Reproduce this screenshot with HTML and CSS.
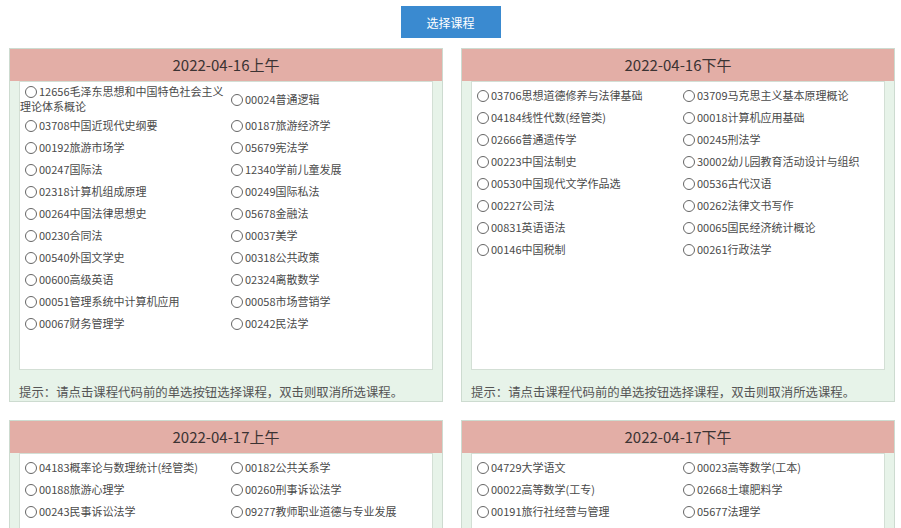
FILE: index.html
```html
<!DOCTYPE html>
<html lang="zh-CN">
<head>
  <meta charset="UTF-8">
  <title>选择课程</title>
  <link rel="stylesheet" href="styles.css">
</head>
<body>
  <div class="toolbar">
    <button class="btn-select" type="button">选择课程</button>
  </div>

  <div class="sessions">
    <!-- 16日上午 -->
    <div class="session">
      <div class="session-title">2022-04-16上午</div>
      <div class="course-box">
        <label class="course long"><input type="radio" name="s1">12656毛泽东思想和中国特色社会主义理论体系概论</label>
        <label class="course"><input type="radio" name="s1">00024普通逻辑</label>
        <label class="course"><input type="radio" name="s1">03708中国近现代史纲要</label>
        <label class="course"><input type="radio" name="s1">00187旅游经济学</label>
        <label class="course"><input type="radio" name="s1">00192旅游市场学</label>
        <label class="course"><input type="radio" name="s1">05679宪法学</label>
        <label class="course"><input type="radio" name="s1">00247国际法</label>
        <label class="course"><input type="radio" name="s1">12340学前儿童发展</label>
        <label class="course"><input type="radio" name="s1">02318计算机组成原理</label>
        <label class="course"><input type="radio" name="s1">00249国际私法</label>
        <label class="course"><input type="radio" name="s1">00264中国法律思想史</label>
        <label class="course"><input type="radio" name="s1">05678金融法</label>
        <label class="course"><input type="radio" name="s1">00230合同法</label>
        <label class="course"><input type="radio" name="s1">00037美学</label>
        <label class="course"><input type="radio" name="s1">00540外国文学史</label>
        <label class="course"><input type="radio" name="s1">00318公共政策</label>
        <label class="course"><input type="radio" name="s1">00600高级英语</label>
        <label class="course"><input type="radio" name="s1">02324离散数学</label>
        <label class="course"><input type="radio" name="s1">00051管理系统中计算机应用</label>
        <label class="course"><input type="radio" name="s1">00058市场营销学</label>
        <label class="course"><input type="radio" name="s1">00067财务管理学</label>
        <label class="course"><input type="radio" name="s1">00242民法学</label>
      </div>
      <p class="hint">提示：请点击课程代码前的单选按钮选择课程，双击则取消所选课程。</p>
    </div>

    <!-- 16日下午 -->
    <div class="session">
      <div class="session-title">2022-04-16下午</div>
      <div class="course-box">
        <label class="course"><input type="radio" name="s2">03706思想道德修养与法律基础</label>
        <label class="course"><input type="radio" name="s2">03709马克思主义基本原理概论</label>
        <label class="course"><input type="radio" name="s2">04184线性代数(经管类)</label>
        <label class="course"><input type="radio" name="s2">00018计算机应用基础</label>
        <label class="course"><input type="radio" name="s2">02666普通遗传学</label>
        <label class="course"><input type="radio" name="s2">00245刑法学</label>
        <label class="course"><input type="radio" name="s2">00223中国法制史</label>
        <label class="course"><input type="radio" name="s2">30002幼儿园教育活动设计与组织</label>
        <label class="course"><input type="radio" name="s2">00530中国现代文学作品选</label>
        <label class="course"><input type="radio" name="s2">00536古代汉语</label>
        <label class="course"><input type="radio" name="s2">00227公司法</label>
        <label class="course"><input type="radio" name="s2">00262法律文书写作</label>
        <label class="course"><input type="radio" name="s2">00831英语语法</label>
        <label class="course"><input type="radio" name="s2">00065国民经济统计概论</label>
        <label class="course"><input type="radio" name="s2">00146中国税制</label>
        <label class="course"><input type="radio" name="s2">00261行政法学</label>
      </div>
      <p class="hint">提示：请点击课程代码前的单选按钮选择课程，双击则取消所选课程。</p>
    </div>

    <!-- 17日上午 -->
    <div class="session">
      <div class="session-title">2022-04-17上午</div>
      <div class="course-box">
        <label class="course"><input type="radio" name="s3">04183概率论与数理统计(经管类)</label>
        <label class="course"><input type="radio" name="s3">00182公共关系学</label>
        <label class="course"><input type="radio" name="s3">00188旅游心理学</label>
        <label class="course"><input type="radio" name="s3">00260刑事诉讼法学</label>
        <label class="course"><input type="radio" name="s3">00243民事诉讼法学</label>
        <label class="course"><input type="radio" name="s3">09277教师职业道德与专业发展</label>
      </div>
      <p class="hint">提示：请点击课程代码前的单选按钮选择课程，双击则取消所选课程。</p>
    </div>

    <!-- 17日下午 -->
    <div class="session">
      <div class="session-title">2022-04-17下午</div>
      <div class="course-box">
        <label class="course"><input type="radio" name="s4">04729大学语文</label>
        <label class="course"><input type="radio" name="s4">00023高等数学(工本)</label>
        <label class="course"><input type="radio" name="s4">00022高等数学(工专)</label>
        <label class="course"><input type="radio" name="s4">02668土壤肥料学</label>
        <label class="course"><input type="radio" name="s4">00191旅行社经营与管理</label>
        <label class="course"><input type="radio" name="s4">05677法理学</label>
      </div>
      <p class="hint">提示：请点击课程代码前的单选按钮选择课程，双击则取消所选课程。</p>
    </div>
  </div>

  <script>
    // 双击取消所选课程
    document.querySelectorAll('.course input').forEach(radio => {
      radio.addEventListener('dblclick', () => {
        radio.checked = false;
      });
    });
  </script>
</body>
</html>
```

FILE: styles.css
```css
body {
  margin: 0;
  background: #fff;
  font-family: "Noto Sans CJK SC", sans-serif;
}

/* 顶部按钮 */
.toolbar {
  text-align: center;
  padding-top: 6px;
}
.btn-select {
  width: 100px;
  height: 32px;
  border: none;
  background-color: #3a8ad0;
  color: #fff;
  font-family: inherit;
  font-size: 12px;
  cursor: pointer;
}

/* 场次 */
.sessions {
  display: grid;
  grid-template-columns: 434px 434px;
  gap: 18px;
  padding: 10px 0 20px 9px;
}
.session {
  border: 1px solid #cddbd0;
  background-color: #e7f3e9;
}
.session-title {
  height: 32px;
  line-height: 32px;
  text-align: center;
  background-color: #e3aea6;
  color: #3b3333;
  font-size: 15px;
}

/* 课程列表 */
.course-box {
  box-sizing: border-box;
  height: 289px;
  margin: 0 9px;
  padding-top: 2px;
  background: #fff;
  border: 1px solid #d3dfd5;
  display: grid;
  grid-template-columns: 1fr 1fr;
  align-items: center;
  align-content: start;
}
.course {
  display: block;
  padding: 3px 0;
  line-height: 16px;
  font-size: 11px;
  color: #4a4a4a;
  cursor: pointer;
}
.course.long {
  padding: 0;
  line-height: 15px;
}
.course input {
  appearance: none;
  -webkit-appearance: none;
  box-sizing: border-box;
  width: 12px;
  height: 12px;
  margin: 0 2px 0 5px;
  border: 1px solid #666;
  border-radius: 50%;
  vertical-align: -2px;
  background: #fff;
}
.course input:checked {
  background: radial-gradient(#333 0 2.5px, #fff 3px);
}

.hint {
  margin: 0;
  padding: 14px 9px 1px;
  line-height: 16px;
  font-size: 12.4px;
  color: #555;
}
```
